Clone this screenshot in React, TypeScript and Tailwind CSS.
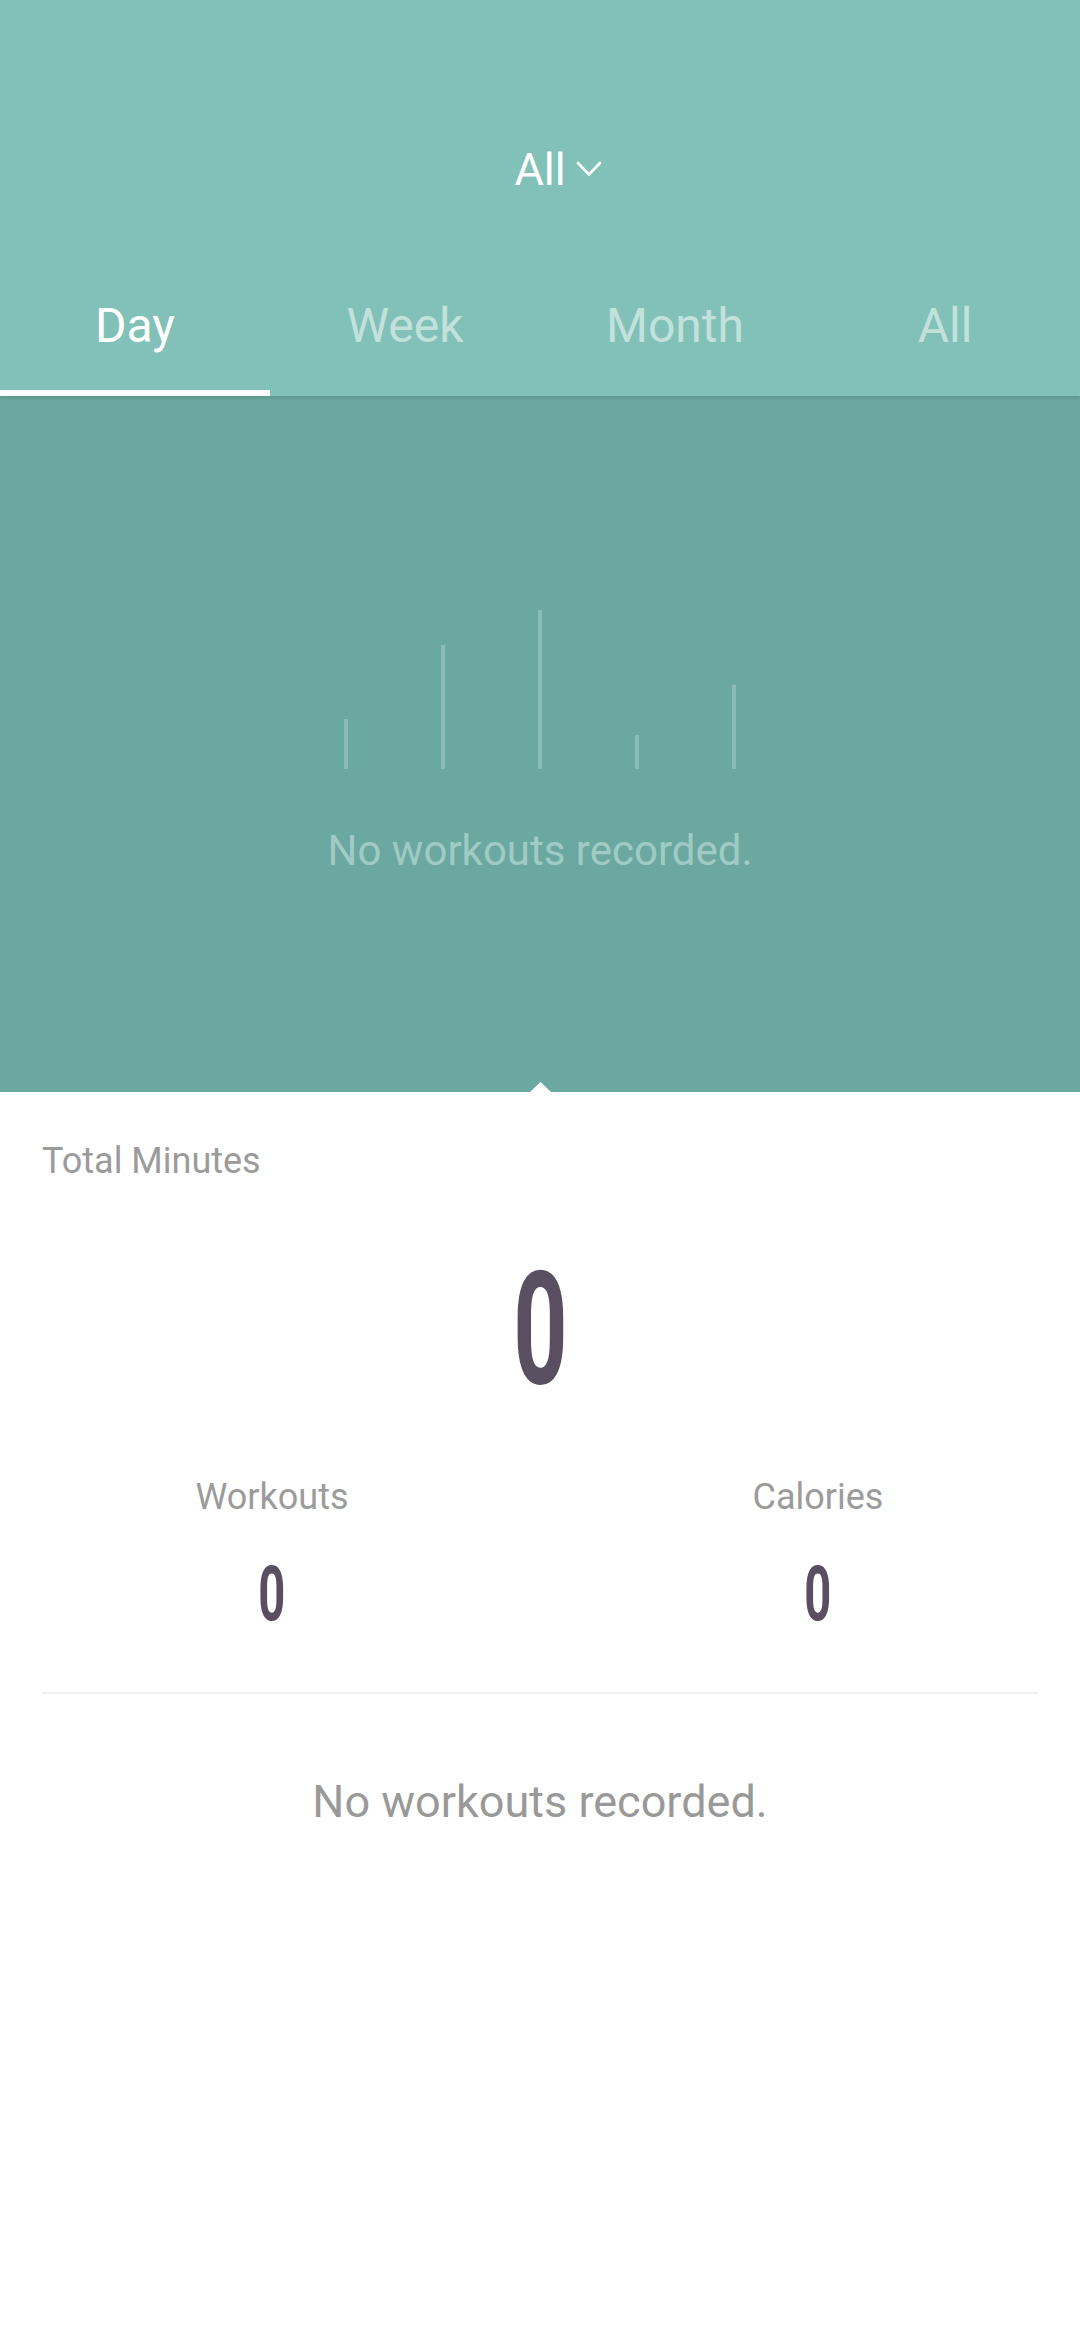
import React from "react";

const bars = [50, 124, 159, 34, 84];

export default function App() {
  const tabs = ["Day", "Week", "Month", "All"];
  return (
    <div className="w-[1080px] min-h-[2340px] bg-white" style={{ fontFamily: "Roboto, 'Noto Sans', sans-serif" }}>
      {/* Header */}
      <div className="bg-[#82c1b7] relative z-10 shadow-[0_2px_3px_rgba(0,0,0,0.12)]">
        <div className="pt-[140px] flex justify-center">
          <span className="relative text-[45px] leading-[60px] text-white">
            All
            <svg
              className="absolute left-full top-[21px] ml-[10px]"
              width="26"
              height="16"
              viewBox="0 0 26 16"
              fill="none"
            >
              <polyline points="2,2 13,13.5 24,2" stroke="white" strokeWidth="2.6" strokeLinecap="round" strokeLinejoin="round" />
            </svg>
          </span>
        </div>
        <div className="grid grid-cols-4">
          {tabs.map((t, i) => (
            <div key={t} className="h-[196px] flex flex-col items-center pt-[96px]">
              <span className={`text-[48px] leading-[60px] ${i === 0 ? "text-white" : "text-[#c3e1dc]"}`}>{t}</span>
              <div className={`mt-auto h-[6px] w-full ${i === 0 ? "bg-white" : "bg-transparent"}`} />
            </div>
          ))}
        </div>
      </div>

      {/* Chart */}
      <div className="relative h-[696px] bg-[#6ba8a0] pt-[214px] flex flex-col items-center">
        <div className="h-[159px] flex items-end gap-[93px]">
          {bars.map((h, i) => (
            <div key={i} className="w-[4px] bg-[#8bbcb5]" style={{ height: h }} />
          ))}
        </div>
        <div className="mt-[57px] text-[42px] leading-[50px] text-[#a0cbc5]">No workouts recorded.</div>
        <svg className="absolute bottom-0 left-[530px]" width="21" height="10" viewBox="0 0 21 10">
          <polygon points="0,10 10.5,0 21,10" fill="white" />
        </svg>
      </div>

      {/* Stats */}
      <div className="pt-[47px]">
        <div className="px-[42px] text-[36px] leading-[44px] text-[#9b9b9b]">Total Minutes</div>
        <div className="mt-[66px] flex justify-center">
          <span className="block text-[158px] leading-[160px] font-bold text-[#594f61] scale-x-[0.6]">0</span>
        </div>
        <div className="mt-[66px] flex">
          <div className="w-[544px] flex flex-col items-center">
            <span className="text-[36px] leading-[44px] text-[#9b9b9b]">Workouts</span>
            <span className="mt-[37px] block text-[76px] leading-[76px] font-bold text-[#594f61] scale-x-[0.62]">0</span>
          </div>
          <div className="flex-1 pl-[12px] flex flex-col items-center">
            <span className="text-[36px] leading-[44px] text-[#9b9b9b]">Calories</span>
            <span className="mt-[37px] block text-[76px] leading-[76px] font-bold text-[#594f61] scale-x-[0.62]">0</span>
          </div>
        </div>
        <div className="mt-[60px] mx-[42px] h-[2px] bg-[#eeeeee]" />
        <div className="mt-[80px] text-center text-[45px] leading-[56px] text-[#999999]">No workouts recorded.</div>
      </div>
    </div>
  );
}
